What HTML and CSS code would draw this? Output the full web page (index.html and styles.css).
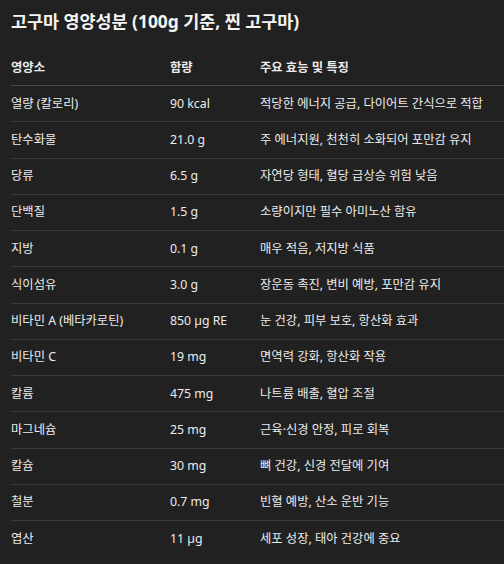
FILE: index.html
```html
<!DOCTYPE html>
<html lang="ko">
<head>
<meta charset="utf-8">
<link rel="stylesheet" href="styles.css">
</head>
<body>
<div class="page">
  <h1 class="title">고구마 영양성분 (100g 기준, 찐 고구마)</h1>
  <table class="nutri">
    <colgroup><col class="c1"><col class="c2"><col class="c3"></colgroup>
    <thead>
      <tr><th>영양소</th><th>함량</th><th>주요 효능 및 특징</th></tr>
    </thead>
    <tbody>
      <tr><td>열량 (칼로리)</td><td>90 kcal</td><td>적당한 에너지 공급, 다이어트 간식으로 적합</td></tr>
      <tr><td>탄수화물</td><td>21.0 g</td><td>주 에너지원, 천천히 소화되어 포만감 유지</td></tr>
      <tr><td>당류</td><td>6.5 g</td><td>자연당 형태, 혈당 급상승 위험 낮음</td></tr>
      <tr><td>단백질</td><td>1.5 g</td><td>소량이지만 필수 아미노산 함유</td></tr>
      <tr><td>지방</td><td>0.1 g</td><td>매우 적음, 저지방 식품</td></tr>
      <tr><td>식이섬유</td><td>3.0 g</td><td>장운동 촉진, 변비 예방, 포만감 유지</td></tr>
      <tr><td>비타민 A (베타카로틴)</td><td>850 µg RE</td><td>눈 건강, 피부 보호, 항산화 효과</td></tr>
      <tr><td>비타민 C</td><td>19 mg</td><td>면역력 강화, 항산화 작용</td></tr>
      <tr><td>칼륨</td><td>475 mg</td><td>나트륨 배출, 혈압 조절</td></tr>
      <tr><td>마그네슘</td><td>25 mg</td><td>근육·신경 안정, 피로 회복</td></tr>
      <tr><td>칼슘</td><td>30 mg</td><td>뼈 건강, 신경 전달에 기여</td></tr>
      <tr><td>철분</td><td>0.7 mg</td><td>빈혈 예방, 산소 운반 기능</td></tr>
      <tr><td>엽산</td><td>11 µg</td><td>세포 성장, 태아 건강에 중요</td></tr>
    </tbody>
  </table>
</div>
</body>
</html>
```
FILE: styles.css
```css
html, body {
  margin: 0;
  padding: 0;
  background: #212121;
}
body {
  color: #ececec;
  font-family: "Noto Sans", "Noto Sans CJK KR", sans-serif;
  font-size: 12.3px;
  overflow: hidden;
}
.page {
  padding: 10px 0 0 11px;
}
.title {
  margin: 0 0 18px 0;
  font-size: 17.4px;
  font-weight: 700;
  line-height: 22px;
  color: #f4f4f4;
}
.nutri {
  width: 100%;
  border-collapse: collapse;
  table-layout: fixed;
}
.c1 { width: 159px; }
.c2 { width: 90px; }
.nutri th,
.nutri td {
  text-align: left;
  padding: 0;
  line-height: 16px;
  vertical-align: middle;
  white-space: nowrap;
}
.nutri th {
  font-weight: 700;
  border-bottom: 1px solid #4a4a4a;
  height: 35px;
}
.nutri td {
  border-bottom: 1px solid #3a3a3a;
  height: 35.25px;
}
.nutri tbody tr:last-child td {
  border-bottom: none;
}
```
